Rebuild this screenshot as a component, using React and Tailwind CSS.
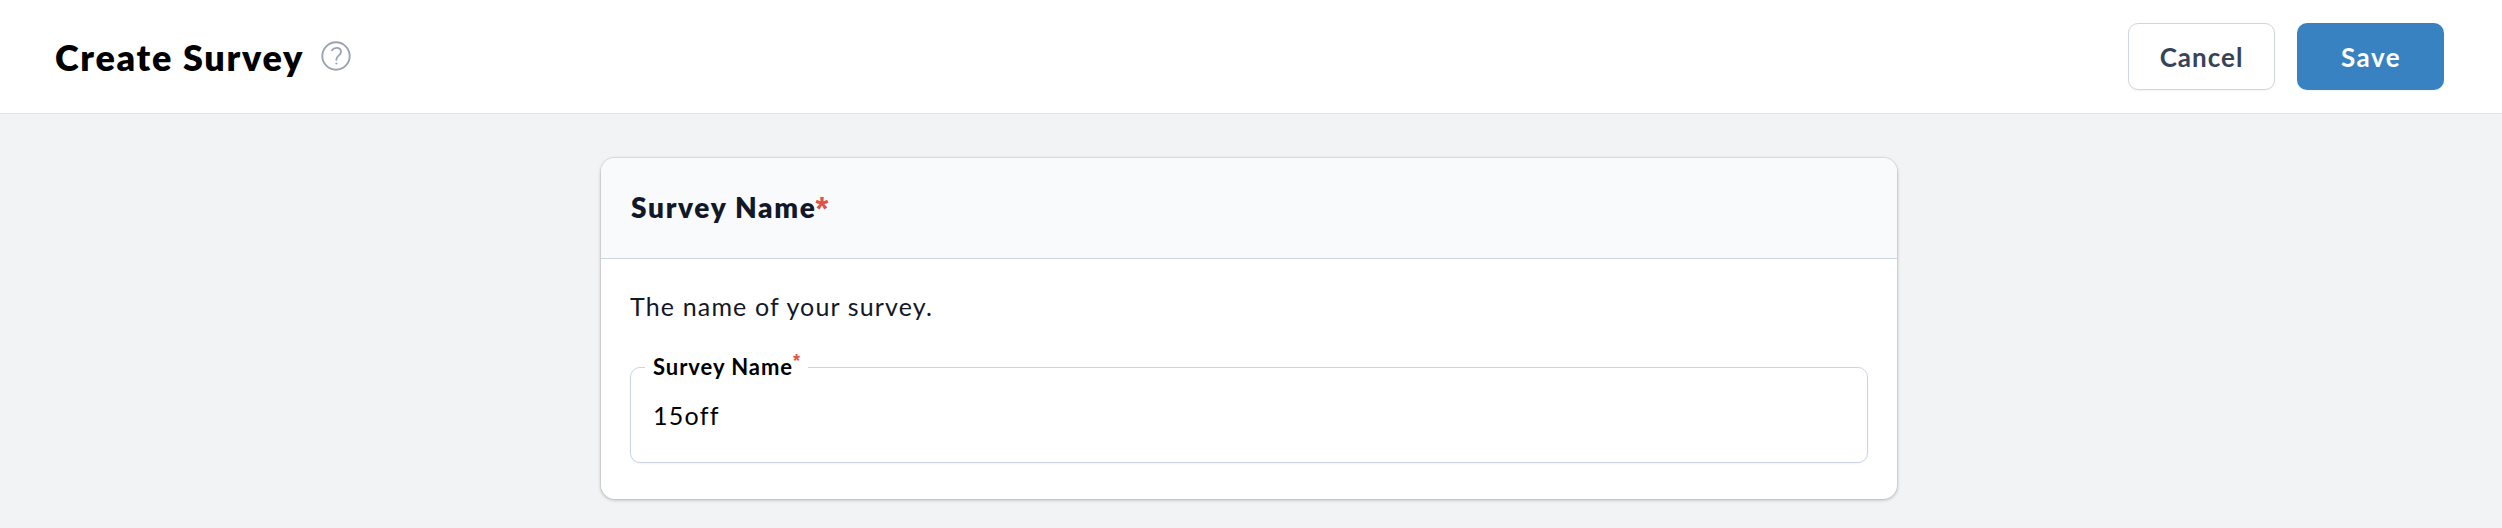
function HelpIcon() {
  return (
    <svg className="-mt-px size-[30px] shrink-0" viewBox="0 0 30 30" fill="none" stroke="#9ca3b4" strokeWidth="1.9" strokeLinecap="round" strokeLinejoin="round">
      <circle cx="15" cy="15" r="13.7" />
      <path d="M11 9.2C12 7.6 13.6 6.9 15.5 6.9C18.3 6.9 20 8.6 20 10.9C20 14.4 15.3 14.5 15.3 18.8" />
      <circle cx="15.4" cy="22.5" r="1.1" fill="#9ca3b4" stroke="none" />
    </svg>
  );
}

export default function App() {
  return (
    <div className="flex h-[528px] flex-col bg-[#f2f3f5] font-['Lato',sans-serif] text-[#111827]">
      <header className="flex h-[114px] shrink-0 items-center justify-between border-b border-[#e1e5e9] bg-white pr-[58px] pl-[54px]">
        <div className="flex items-center gap-[18px]">
          <h1 className="w-[249px] pl-px text-[36px] leading-[44px] font-extrabold tracking-[1.7px] whitespace-nowrap text-black">Create Survey</h1>
          <HelpIcon />
        </div>
        <div className="flex gap-[22px]">
          <button className="h-[67px] w-[147px] rounded-[10px] border border-[#cfd6e2] bg-white pt-[2px] text-[26px] font-bold tracking-[1px] text-[#374357] shadow-xs">Cancel</button>
          <button className="h-[67px] w-[147px] rounded-[10px] bg-[#3982c1] pt-[2px] pl-px text-[26px] font-bold tracking-[1.5px] text-white shadow-xs">Save</button>
        </div>
      </header>
      <main className="flex justify-center pt-[44px] pr-[4px]">
        <section className="h-[341px] w-[1296px] overflow-hidden rounded-[14px] bg-white shadow-[0_0_0_1px_rgba(0,0,0,0.05),0_1px_3px_1px_rgba(0,0,0,0.16)]">
          <div className="flex h-[101px] items-center border-b border-[#cbd5dc] bg-[#f9fafc] px-[30px]">
            <h2 className="flex text-[28px] leading-[36px] font-extrabold tracking-[1.7px] whitespace-nowrap">
              Survey Name<span className="-ml-px pt-[2px] font-['Liberation_Sans',sans-serif] text-[33px] font-bold text-[#df5149]">*</span>
            </h2>
          </div>
          <div className="px-[29px] pt-[29px]">
            <p className="text-[25px] leading-[36px] tracking-[1.15px] whitespace-nowrap">The name of your survey.</p>
            <div className="mt-[43px] h-[96px] w-[1238px] rounded-[10px] border border-[#cbd5e1] bg-white px-[14px] text-black shadow-xs">
              <label className="-mt-[16px] flex h-[30px] w-[163px] items-center bg-white pl-[8px] text-[22px] leading-[30px] font-bold tracking-[0.95px] whitespace-nowrap">
                Survey Name
                <span className="-mt-[13px] font-['Liberation_Sans',sans-serif] text-[18px] leading-none font-bold text-[#df5149]">*</span>
              </label>
              <input className="mt-[16px] block h-[36px] w-full pl-[8px] text-[25px] tracking-[1.3px] outline-none" defaultValue="15off" />
            </div>
          </div>
        </section>
      </main>
    </div>
  );
}
